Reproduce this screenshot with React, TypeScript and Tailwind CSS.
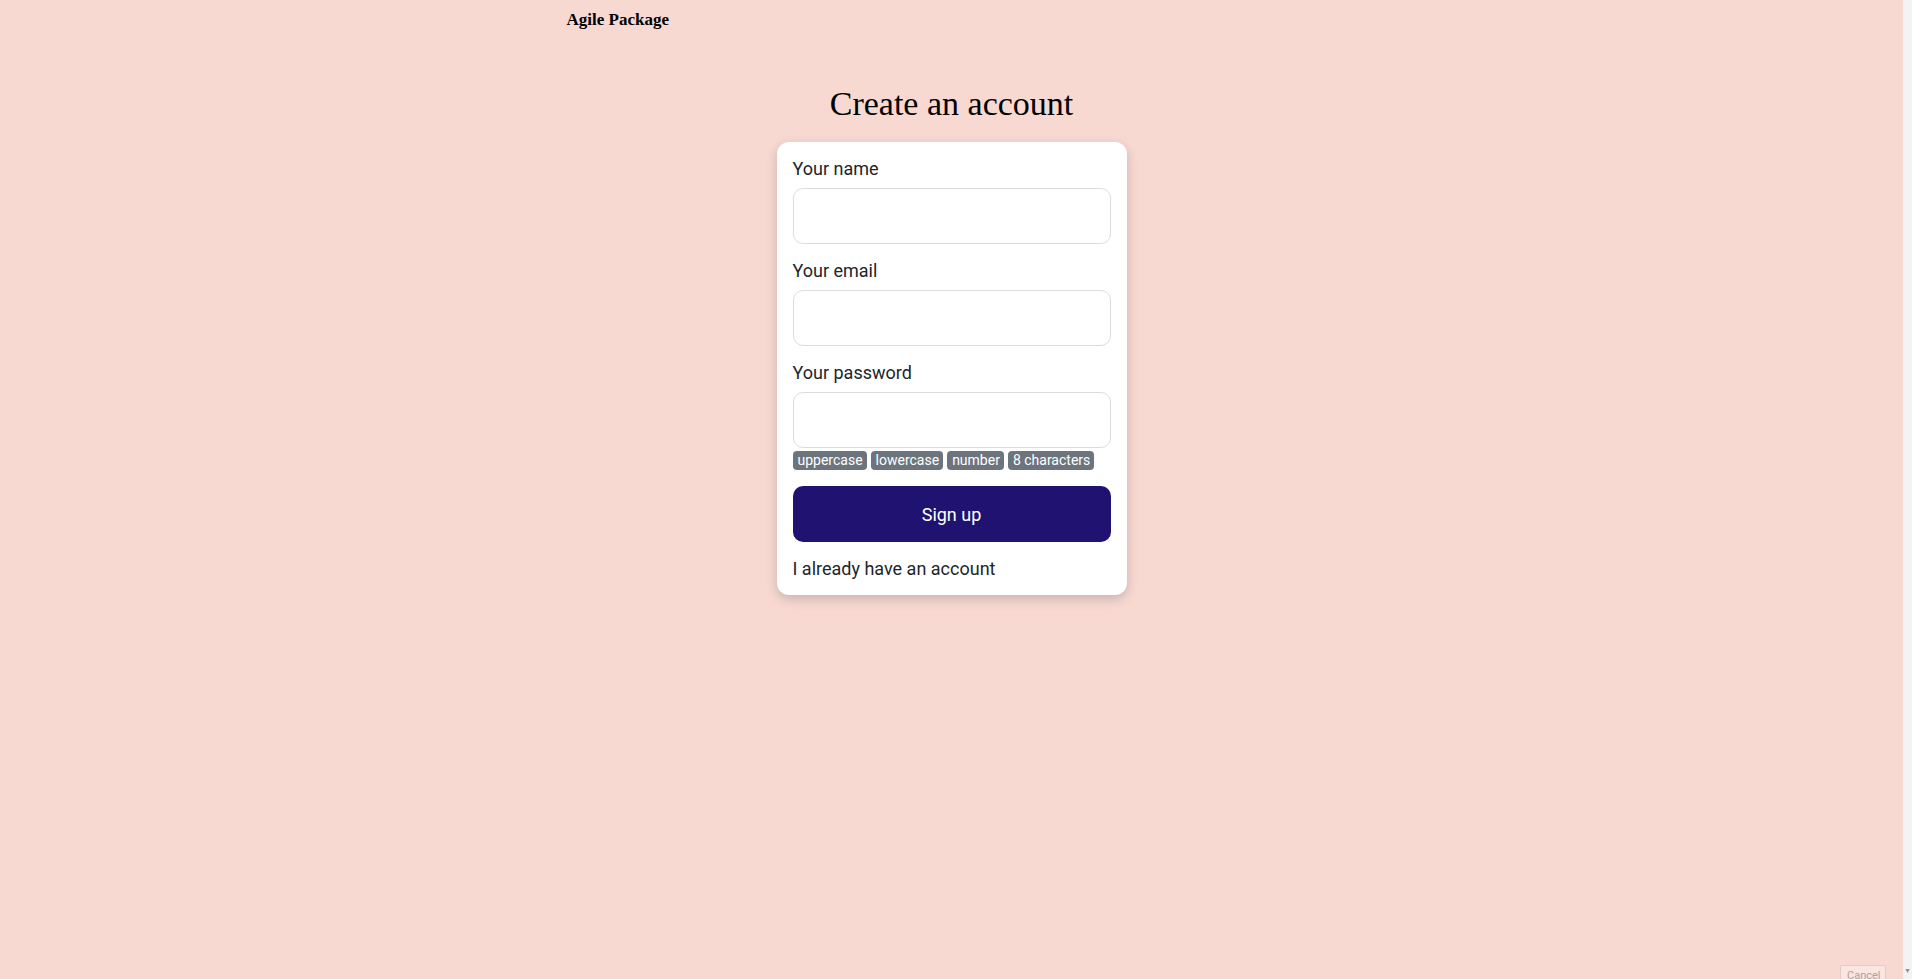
import { useState } from 'react';

const badges = ['uppercase', 'lowercase', 'number', '8 characters'];

function Field({ label, type }: { label: string; type: string }) {
  const [value, setValue] = useState('');
  return (
    <div className="mb-[15px]">
      <label className="block text-[18px] leading-[24px] text-[#212529] mb-[7px]">{label}</label>
      <input
        type={type}
        value={value}
        onChange={(e) => setValue(e.target.value)}
        className="block w-full h-14 rounded-[10px] border border-[#dcdcdc] bg-white px-3 text-[18px] outline-none"
      />
    </div>
  );
}

export default function App() {
  const [password, setPassword] = useState('');

  return (
    <div className="relative flex h-[979px] w-full overflow-hidden bg-[#f7d9d2] font-['Roboto',sans-serif]">
      <div className="flex-1 flex flex-col">
        {/* Nav */}
        <nav className="w-full max-w-[800px] mx-auto px-[15px] pt-[8px]">
          <span className="block font-['Liberation_Serif',serif] font-bold text-[17px] leading-[24px] text-black">
            Agile Package
          </span>
        </nav>

        <h1 className="mt-[51px] text-center font-['Liberation_Serif',serif] text-[34px] leading-[41px] text-black">
          Create an account
        </h1>

        <div className="mx-auto mt-[18px] w-[350px] rounded-[12px] bg-white px-4 pt-[15px] pb-[14px] shadow-[0_4px_12px_rgba(0,0,0,0.18)]">
          <Field label="Your name" type="text" />
          <Field label="Your email" type="email" />

          <div>
            <label className="block text-[18px] leading-[24px] text-[#212529] mb-[7px]">Your password</label>
            <input
              type="password"
              value={password}
              onChange={(e) => setPassword(e.target.value)}
              className="block w-full h-14 rounded-[10px] border border-[#dcdcdc] bg-white px-3 text-[18px] outline-none"
            />
            <div className="mt-[3px] flex gap-1">
              {badges.map((b) => (
                <span
                  key={b}
                  className="rounded-[4px] bg-[#6c757d] pl-[5px] pr-[4px] text-[14px] leading-[19px] text-white"
                >
                  {b}
                </span>
              ))}
            </div>
          </div>

          <button className="mt-[16px] h-14 w-full rounded-[10px] bg-[#201270] text-[18px] text-white">
            Sign up
          </button>

          <p className="mt-[15px] text-[18px] leading-[24px] text-[#212529]">I already have an account</p>
        </div>
      </div>

      {/* scrollbar strip */}
      <div className="w-[9px] flex flex-col justify-end items-center bg-[#f3f3f3] pb-1">
        <span className="text-[7px] leading-none text-[#9a8a86]">▼</span>
      </div>

      {/* partially visible overlay button in corner */}
      <div className="absolute left-[1840px] top-[965px] h-[30px] w-[46px] rounded-[2px] border border-[#e6c9c2] bg-[#f9e6e1] pl-[6px] pt-[2px] text-[11px] text-[#b0a09c]">
        Cancel
      </div>
    </div>
  );
}
